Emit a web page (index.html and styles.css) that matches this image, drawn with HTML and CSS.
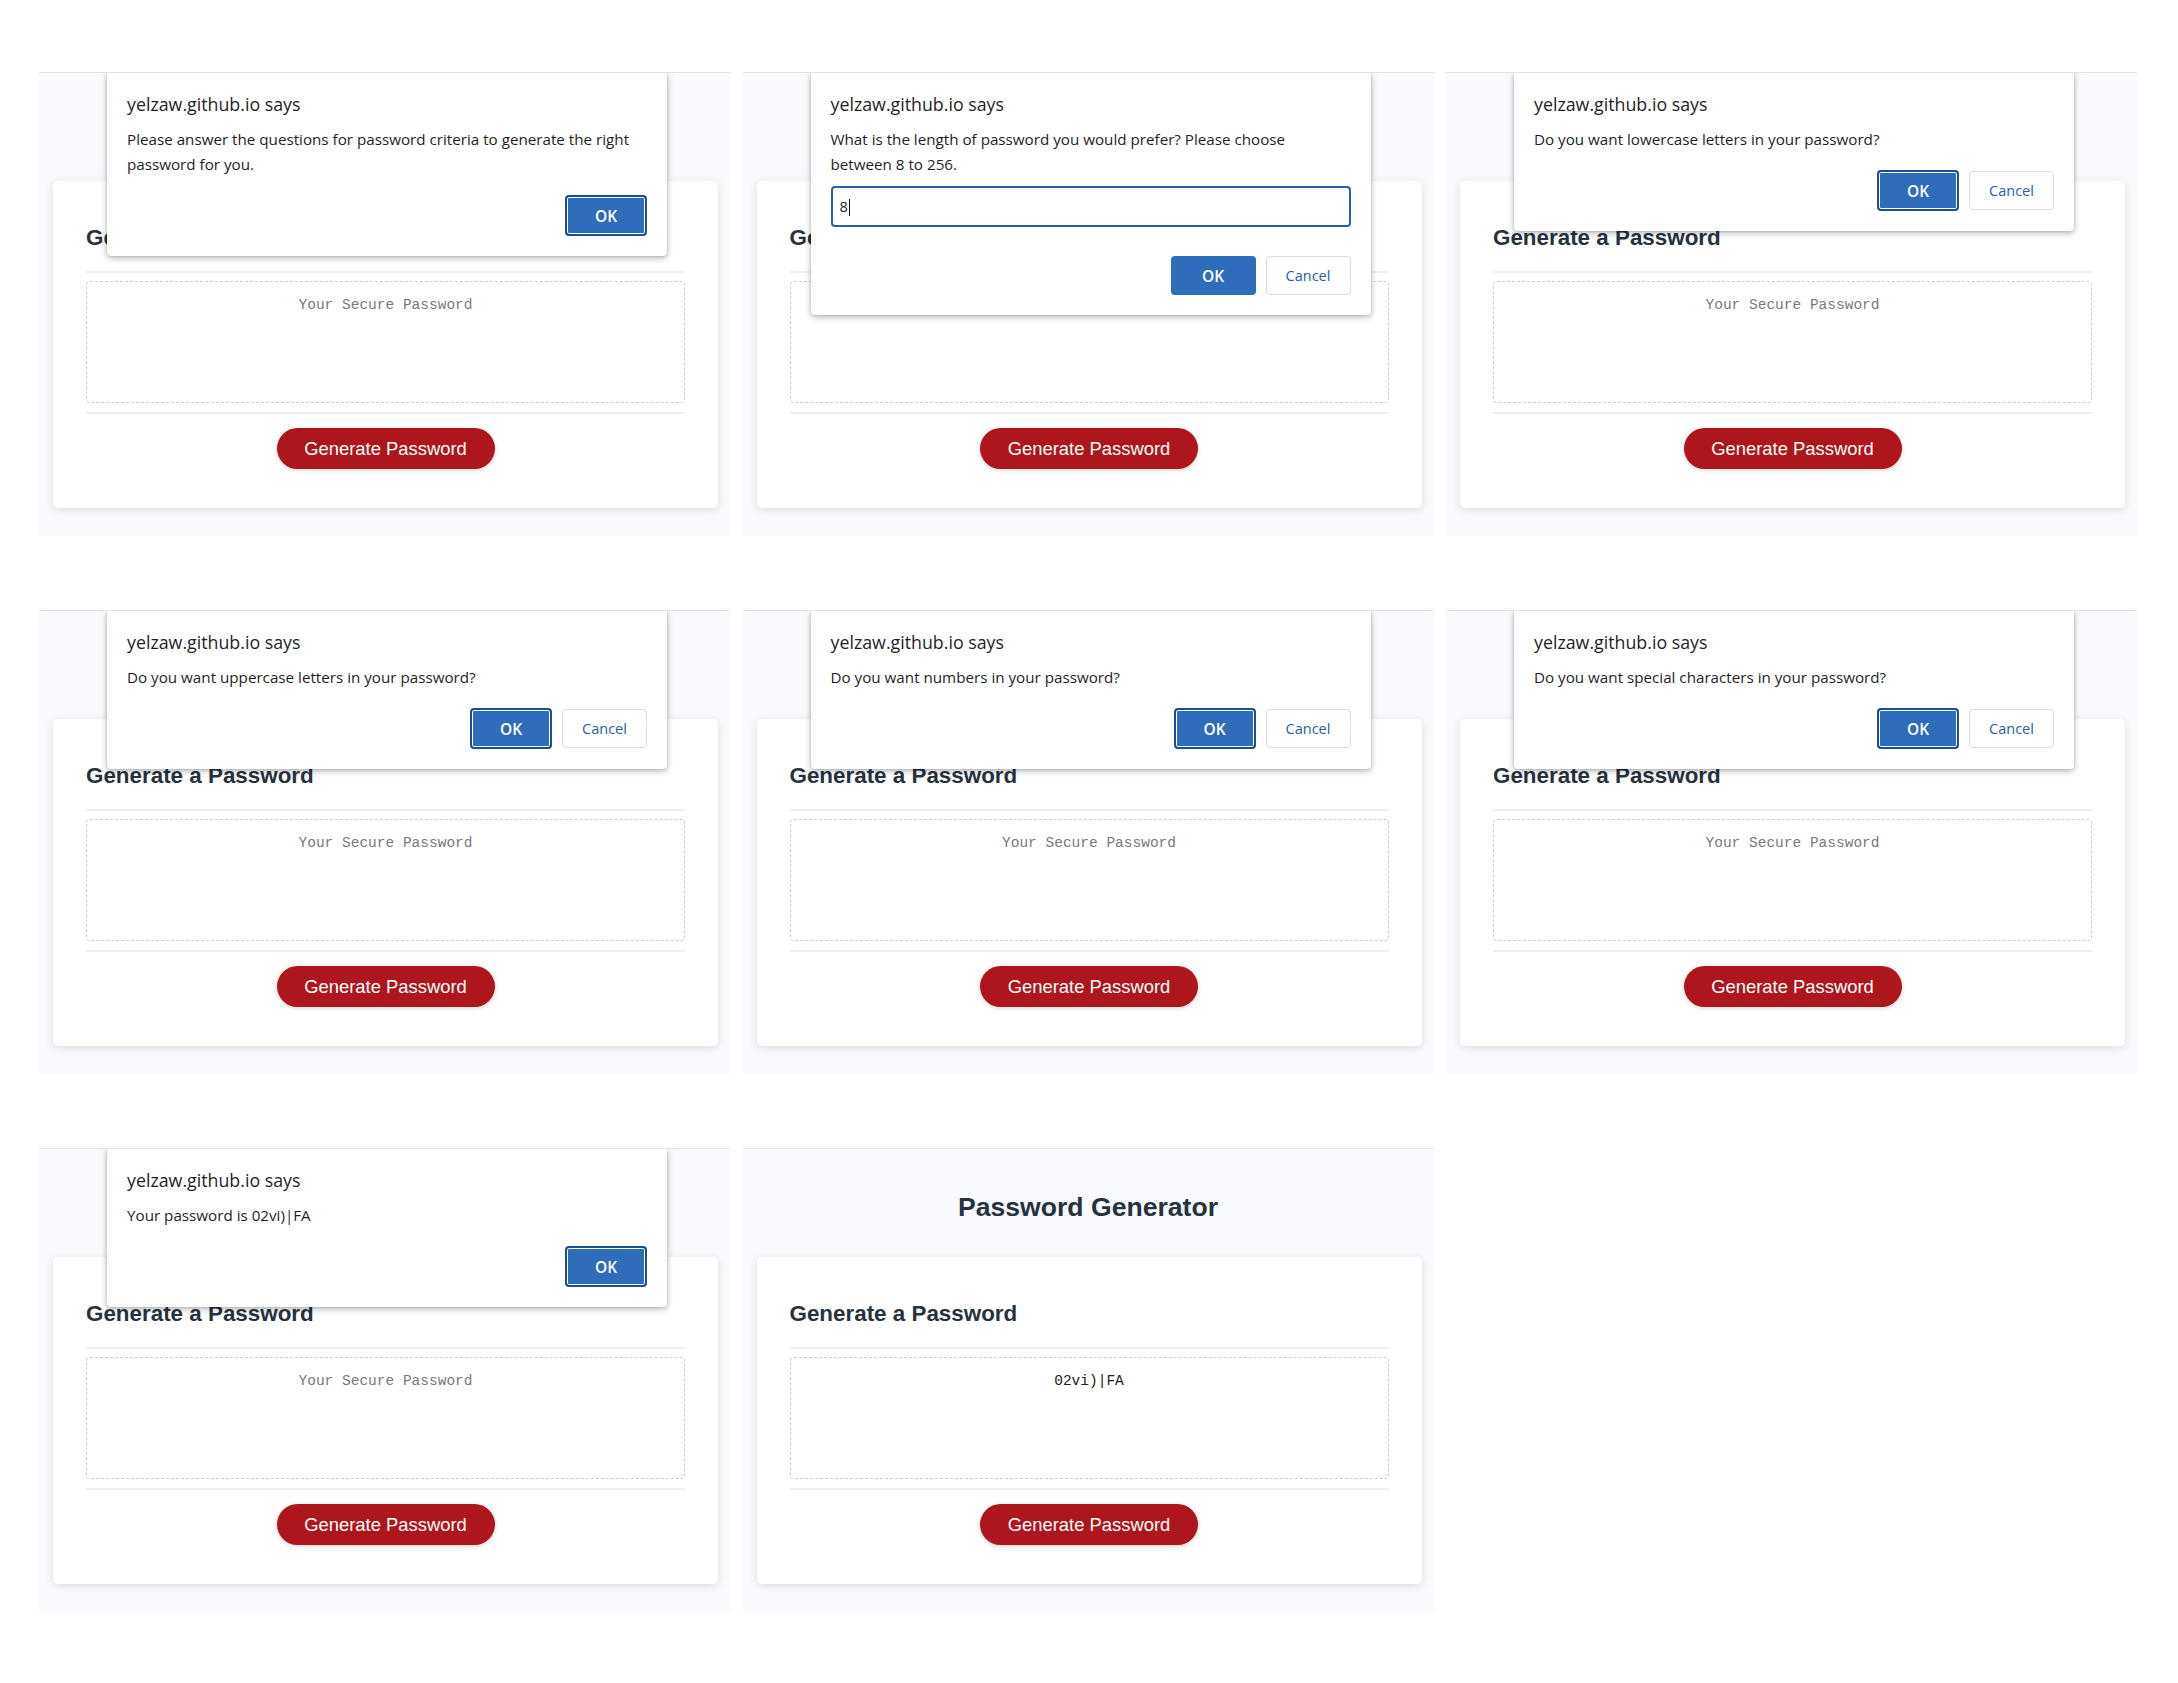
FILE: index.html
```html
<!DOCTYPE html>
<html lang="en">
<head>
<meta charset="utf-8">
<title>Password Generator – walkthrough</title>
<link rel="stylesheet" href="styles.css">
</head>
<body>
<main class="sheet">

  <!-- 1: intro alert -->
  <section class="panel">
    <h1 class="page-title covered">Password Generator</h1>
    <div class="card">
      <h2 class="card-title">Generate a Password</h2>
      <div class="rule rule-top"></div>
      <div class="output empty">Your Secure Password</div>
      <div class="rule"></div>
      <div class="footer"><button class="gen-btn">Generate Password</button></div>
    </div>
    <div class="dialog">
      <div class="dialog-title">yelzaw.github.io says</div>
      <div class="dialog-msg">Please answer the questions for password criteria to generate the right<br>password for you.</div>
      <div class="dialog-actions"><button class="dlg-btn ok focused">OK</button></div>
    </div>
  </section>

  <!-- 2: length prompt -->
  <section class="panel">
    <h1 class="page-title covered">Password Generator</h1>
    <div class="card">
      <h2 class="card-title">Generate a Password</h2>
      <div class="rule rule-top"></div>
      <div class="output empty">Your Secure Password</div>
      <div class="rule"></div>
      <div class="footer"><button class="gen-btn">Generate Password</button></div>
    </div>
    <div class="dialog">
      <div class="dialog-title">yelzaw.github.io says</div>
      <div class="dialog-msg">What is the length of password you would prefer? Please choose<br>between 8 to 256.</div>
      <div class="dialog-input">8<span class="caret"></span></div>
      <div class="dialog-actions prompt-actions"><button class="dlg-btn ok">OK</button><button class="dlg-btn cancel">Cancel</button></div>
    </div>
  </section>

  <!-- 3: lowercase -->
  <section class="panel">
    <h1 class="page-title covered">Password Generator</h1>
    <div class="card">
      <h2 class="card-title">Generate a Password</h2>
      <div class="rule rule-top"></div>
      <div class="output empty">Your Secure Password</div>
      <div class="rule"></div>
      <div class="footer"><button class="gen-btn">Generate Password</button></div>
    </div>
    <div class="dialog">
      <div class="dialog-title">yelzaw.github.io says</div>
      <div class="dialog-msg">Do you want lowercase letters in your password?</div>
      <div class="dialog-actions"><button class="dlg-btn ok focused">OK</button><button class="dlg-btn cancel">Cancel</button></div>
    </div>
  </section>

  <!-- 4: uppercase -->
  <section class="panel">
    <h1 class="page-title covered">Password Generator</h1>
    <div class="card">
      <h2 class="card-title">Generate a Password</h2>
      <div class="rule rule-top"></div>
      <div class="output empty">Your Secure Password</div>
      <div class="rule"></div>
      <div class="footer"><button class="gen-btn">Generate Password</button></div>
    </div>
    <div class="dialog">
      <div class="dialog-title">yelzaw.github.io says</div>
      <div class="dialog-msg">Do you want uppercase letters in your password?</div>
      <div class="dialog-actions"><button class="dlg-btn ok focused">OK</button><button class="dlg-btn cancel">Cancel</button></div>
    </div>
  </section>

  <!-- 5: numbers -->
  <section class="panel">
    <h1 class="page-title covered">Password Generator</h1>
    <div class="card">
      <h2 class="card-title">Generate a Password</h2>
      <div class="rule rule-top"></div>
      <div class="output empty">Your Secure Password</div>
      <div class="rule"></div>
      <div class="footer"><button class="gen-btn">Generate Password</button></div>
    </div>
    <div class="dialog">
      <div class="dialog-title">yelzaw.github.io says</div>
      <div class="dialog-msg">Do you want numbers in your password?</div>
      <div class="dialog-actions"><button class="dlg-btn ok focused">OK</button><button class="dlg-btn cancel">Cancel</button></div>
    </div>
  </section>

  <!-- 6: special characters -->
  <section class="panel">
    <h1 class="page-title covered">Password Generator</h1>
    <div class="card">
      <h2 class="card-title">Generate a Password</h2>
      <div class="rule rule-top"></div>
      <div class="output empty">Your Secure Password</div>
      <div class="rule"></div>
      <div class="footer"><button class="gen-btn">Generate Password</button></div>
    </div>
    <div class="dialog">
      <div class="dialog-title">yelzaw.github.io says</div>
      <div class="dialog-msg">Do you want special characters in your password?</div>
      <div class="dialog-actions"><button class="dlg-btn ok focused">OK</button><button class="dlg-btn cancel">Cancel</button></div>
    </div>
  </section>

  <!-- 7: result alert -->
  <section class="panel">
    <h1 class="page-title covered">Password Generator</h1>
    <div class="card">
      <h2 class="card-title">Generate a Password</h2>
      <div class="rule rule-top"></div>
      <div class="output empty">Your Secure Password</div>
      <div class="rule"></div>
      <div class="footer"><button class="gen-btn">Generate Password</button></div>
    </div>
    <div class="dialog">
      <div class="dialog-title">yelzaw.github.io says</div>
      <div class="dialog-msg">Your password is 02vi)|FA</div>
      <div class="dialog-actions"><button class="dlg-btn ok focused">OK</button></div>
    </div>
  </section>

  <!-- 8: final page -->
  <section class="panel">
    <h1 class="page-title">Password Generator</h1>
    <div class="card">
      <h2 class="card-title">Generate a Password</h2>
      <div class="rule rule-top"></div>
      <div class="output">02vi)|FA</div>
      <div class="rule"></div>
      <div class="footer"><button class="gen-btn">Generate Password</button></div>
    </div>
  </section>

</main>
</body>
</html>
```
FILE: styles.css
```css
* {
  box-sizing: border-box;
}

body {
  margin: 0;
  background: #ffffff;
  font-family: "Liberation Sans", Arial, sans-serif;
}

.sheet {
  display: grid;
  grid-template-columns: repeat(3, 691px);
  column-gap: 12.5px;
  row-gap: 74px;
  padding: 72px 0 0 39px;
}

.panel {
  position: relative;
  height: 464px;
  background: #f8fafd;
  border-top: 1px solid #dfe2e6;
  overflow: hidden;
}

.page-title {
  margin: 0;
  height: 108px;
  padding-top: 42px;
  text-align: center;
  font-size: 26.6px;
  line-height: 32px;
  font-weight: 700;
  color: #26323e;
}

/* hidden behind the browser dialog in these shots */
.page-title.covered {
  visibility: hidden;
}

.card {
  margin-left: 14px;
  width: 665px;
  background: #ffffff;
  border-radius: 5px;
  box-shadow: 0 2px 8px rgba(0, 0, 0, 0.12);
  padding: 43px 33px 39px;
  color: #26323e;
}

.card-title {
  margin: 0;
  font-size: 22.4px;
  line-height: 28px;
  font-weight: 700;
}

.rule {
  height: 2px;
  background: #eceef1;
}

.rule-top {
  margin-top: 19px;
}

.output {
  margin: 8px 0 9px;
  height: 122px;
  border: 1px dashed #c9ced4;
  border-radius: 4px;
  padding-top: 14px;
  text-align: center;
  font-family: "Liberation Mono", "DejaVu Sans Mono", monospace;
  font-size: 14.5px;
  line-height: 18px;
  color: #222222;
}

.output.empty {
  color: #7a7a7a;
}

.footer {
  padding-top: 14px;
  text-align: center;
}

.gen-btn {
  width: 218px;
  height: 41px;
  border: 0;
  border-radius: 21px;
  background: #ad161c;
  color: #ffffff;
  font-family: "Liberation Sans", Arial, sans-serif;
  font-size: 18.4px;
  box-shadow: 0 1px 4px rgba(0, 0, 0, 0.2);
  padding: 0;
}

/* browser dialog */
.dialog {
  position: absolute;
  top: 0;
  left: 68px;
  width: 560px;
  z-index: 2;
  background: #ffffff;
  border-radius: 0 0 4px 4px;
  box-shadow: 0 2px 6px rgba(0, 0, 0, 0.3), 0 0 2px rgba(0, 0, 0, 0.18);
  padding: 19px 20px 20px;
  font-family: "Open Sans", "Noto Sans", sans-serif;
  color: #1f1f1f;
}

.dialog-title {
  font-size: 17.8px;
  line-height: 24px;
}

.dialog-msg {
  margin-top: 10.5px;
  font-size: 15.2px;
  line-height: 25px;
}

.dialog-input {
  margin-top: 9.5px;
  height: 41px;
  border: 2px solid #2c5fab;
  border-radius: 4px;
  padding: 0 7px;
  font-size: 14.5px;
  line-height: 37px;
  color: #1f1f1f;
}

.caret {
  display: inline-block;
  width: 1px;
  height: 17px;
  margin-left: 1px;
  background: #111111;
  vertical-align: -4px;
}

.dialog-actions {
  display: flex;
  justify-content: flex-end;
  align-items: center;
  gap: 10px;
  height: 41px;
  margin-top: 18.5px;
}

.prompt-actions {
  height: 39px;
  margin-top: 29px;
}

.dlg-btn {
  display: flex;
  align-items: center;
  justify-content: center;
  height: 39px;
  padding: 0;
  border-radius: 4px;
  font-family: "Open Sans", "Noto Sans", sans-serif;
  font-size: 15.5px;
}

.ok {
  width: 85px;
  border: 0;
  background: #2f6cba;
  color: #ffffff;
  font-weight: 600;
}

.ok.focused {
  width: 82px;
  height: 41px;
  border: 2px solid #1c4e90;
  box-shadow: inset 0 0 0 1px #ffffff;
}

.cancel {
  width: 85px;
  border: 1px solid #dadce0;
  background: #ffffff;
  color: #2a5ea8;
  font-size: 14.5px;
}
```
